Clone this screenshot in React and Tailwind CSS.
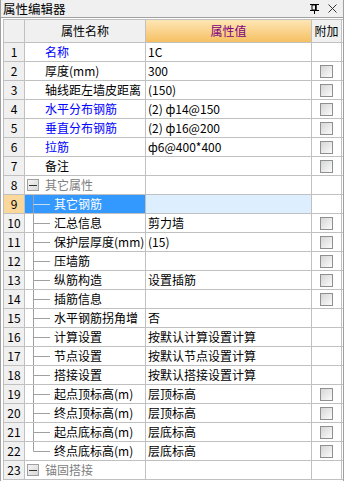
import React from 'react';

const rows = [
  { n: 1, name: '名称', blue: true, value: '1C' },
  { n: 2, name: '厚度(mm)', value: '300', cb: true },
  { n: 3, name: '轴线距左墙皮距离', value: '(150)', cb: true },
  { n: 4, name: '水平分布钢筋', blue: true, value: '(2) ф14@150', cb: true },
  { n: 5, name: '垂直分布钢筋', blue: true, value: '(2) ф16@200', cb: true },
  { n: 6, name: '拉筋', blue: true, value: 'ф6@400*400', cb: true },
  { n: 7, name: '备注', value: '', cb: true },
  { n: 8, name: '其它属性', group: true },
  { n: 9, name: '其它钢筋', child: true, selected: true },
  { n: 10, name: '汇总信息', child: true, value: '剪力墙', cb: true },
  { n: 11, name: '保护层厚度(mm)', child: true, value: '(15)', cb: true },
  { n: 12, name: '压墙筋', child: true, value: '', cb: true },
  { n: 13, name: '纵筋构造', child: true, value: '设置插筋', cb: true },
  { n: 14, name: '插筋信息', child: true, value: '', cb: true },
  { n: 15, name: '水平钢筋拐角增', child: true, value: '否' },
  { n: 16, name: '计算设置', child: true, value: '按默认计算设置计算' },
  { n: 17, name: '节点设置', child: true, value: '按默认节点设置计算' },
  { n: 18, name: '搭接设置', child: true, value: '按默认搭接设置计算' },
  { n: 19, name: '起点顶标高(m)', child: true, value: '层顶标高', cb: true },
  { n: 20, name: '终点顶标高(m)', child: true, value: '层顶标高', cb: true },
  { n: 21, name: '起点底标高(m)', child: true, value: '层底标高', cb: true },
  { n: 22, name: '终点底标高(m)', child: true, value: '层底标高', cb: true, last: true },
  { n: 23, name: '锚固搭接', group: true },
];

const Checkbox = () => (
  <div className="w-[13px] h-[13px] border border-[#8e8f8f] bg-gradient-to-br from-[#d6d6d6] to-[#fbfbfb]" />
);

const MinusBox = () => (
  <div className="w-[12px] h-[12px] border border-[#a0a0a0] bg-gradient-to-br from-[#f4f4f4] to-[#d8d8d8] flex items-center justify-center">
    <div className="w-[8px] h-px bg-[#333]" />
  </div>
);

const TreeLines = ({ last, selected }) => (
  <svg width="26" height="18" className="shrink-0">
    <line x1="8.5" y1="0" x2="8.5" y2={last ? 9.5 : 18} stroke="#a0a0a0" />
    <line x1="8.5" y1="9.5" x2="25" y2="9.5" stroke={selected ? '#c8dcf0' : '#a0a0a0'} />
  </svg>
);

const Row = ({ r }) => {
  const nameColor = r.group ? 'text-[#808080]' : r.selected ? 'text-white' : r.blue ? 'text-[#0000ff]' : 'text-black';
  return (
    <div className="flex h-[19px] border-b border-[#c0c0c0]">
      <div className={`w-[21px] shrink-0 border-r border-[#c0c0c0] flex items-center justify-center ${r.selected ? 'bg-[#fad89c]' : 'bg-[#f0f0f0]'}`}>
        {r.n}
      </div>
      <div className={`w-[121px] shrink-0 border-r border-[#c0c0c0] flex items-center whitespace-nowrap overflow-hidden ${r.selected ? 'bg-[#3399ff]' : ''} ${nameColor}`}>
        {r.group && (
          <>
            <div className="ml-[2px] mr-[6px]"><MinusBox /></div>
            <span>{r.name}</span>
          </>
        )}
        {r.child && (
          <>
            <TreeLines last={r.last} selected={r.selected} />
            <span className="ml-[3px]">{r.name}</span>
          </>
        )}
        {!r.group && !r.child && <span className="ml-[20px]">{r.name}</span>}
      </div>
      <div className={`w-[166px] shrink-0 border-r border-[#c0c0c0] flex items-center pl-[2px] whitespace-nowrap ${r.selected ? 'bg-[#ddeeff]' : ''}`}>
        {r.value}
      </div>
      <div className="w-[30px] shrink-0 border-r border-[#c0c0c0] flex items-center justify-center">
        {r.cb && <Checkbox />}
      </div>
    </div>
  );
};

export default function App() {
  return (
    <div
      className="w-[344px] h-[481px] bg-white border-x border-[#a0a0a0] text-[12px] leading-[16px] overflow-hidden"
      style={{ fontFamily: '"Noto Sans CJK SC", "Liberation Sans", sans-serif' }}
    >
      {/* 标题栏 */}
      <div className="h-[18px] bg-[#f0f0f0] border-b border-[#a0a0a0] flex items-center justify-between pl-[2px] pr-[6px]">
        <span className="text-[12.5px] leading-[17px] text-black">属性编辑器</span>
        <div className="flex items-center gap-[9px]">
          <svg width="9" height="10" viewBox="0 0 9 10">
            <rect x="0" y="0" width="9" height="1" fill="#000" />
            <rect x="2" y="1" width="4" height="5" fill="none" stroke="#000" strokeWidth="1" />
            <rect x="5" y="1" width="1.5" height="5" fill="#000" />
            <rect x="0" y="6" width="9" height="1" fill="#000" />
            <rect x="4" y="7" width="1" height="3" fill="#000" />
          </svg>
          <svg width="9" height="9" viewBox="0 0 9 9">
            <path d="M0.5 0.5 L8.5 8.5 M8.5 0.5 L0.5 8.5" stroke="#333" strokeWidth="1" />
          </svg>
        </div>
      </div>

      {/* 表格 */}
      <div className="mt-px ml-[2px] w-[340px] border-l border-t border-[#c0c0c0]">
        <div className="flex h-[23px] border-b border-[#c0c0c0]">
          <div className="w-[21px] shrink-0 border-r border-[#c0c0c0] bg-[#f0f0f0]" />
          <div className="w-[121px] shrink-0 border-r border-[#c0c0c0] bg-[#f0f0f0] flex items-center justify-center text-black">
            属性名称
          </div>
          <div className="w-[166px] shrink-0 border-r border-[#c0c0c0] bg-gradient-to-b from-[#fde6b4] to-[#f6c061] flex items-center justify-center text-[#800080]">
            属性值
          </div>
          <div className="w-[30px] shrink-0 border-r border-[#c0c0c0] bg-[#f0f0f0] flex items-center justify-center text-black">
            附加
          </div>
        </div>
        {rows.map((r) => (
          <Row key={r.n} r={r} />
        ))}
      </div>
    </div>
  );
}
